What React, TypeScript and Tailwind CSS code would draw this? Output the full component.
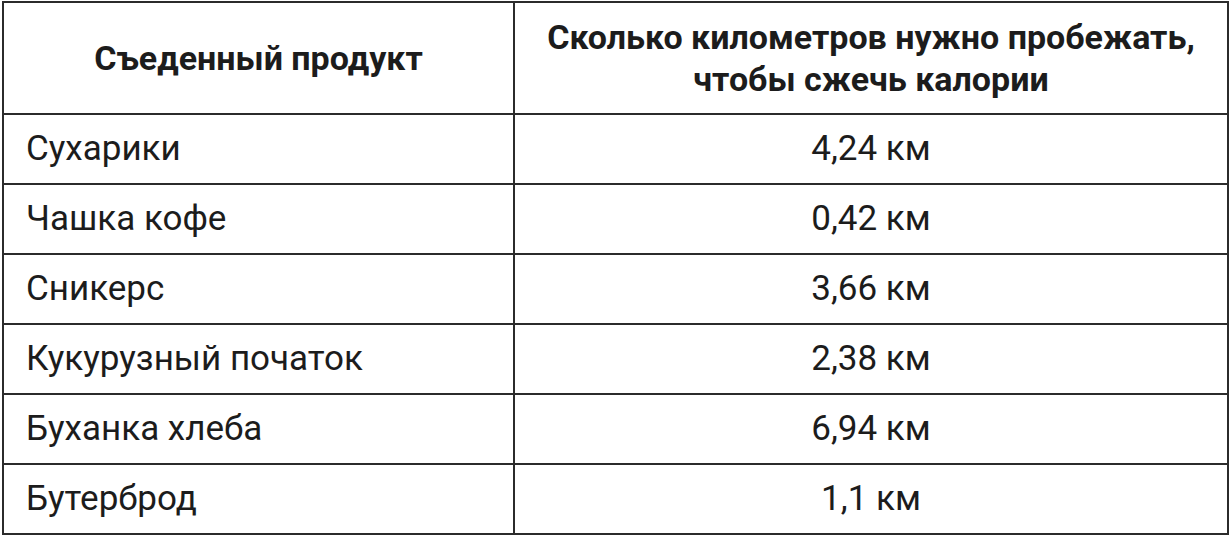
import React from 'react';

const rows: [string, string][] = [
  ['Сухарики', '4,24 км'],
  ['Чашка кофе', '0,42 км'],
  ['Сникерс', '3,66 км'],
  ['Кукурузный початок', '2,38 км'],
  ['Буханка хлеба', '6,94 км'],
  ['Бутерброд', '1,1 км'],
];

const App = () => {
  return (
    <div className="w-[1231px] h-[537px] bg-white pl-[2px] pt-[1px] font-['Roboto',sans-serif] text-[#1c1c1c]">
      <table className="w-[1227px] border-collapse border-2 border-[#2b2b2b] table-fixed">
        <colgroup>
          <col className="w-[511px]" />
          <col />
        </colgroup>
        <thead>
          <tr className="h-[112px]">
            <th className="border-2 border-[#2b2b2b] text-center align-middle text-[34px] font-bold leading-[42px]">
              Съеденный продукт
            </th>
            <th className="border-2 border-[#2b2b2b] text-center align-middle text-[34px] font-bold leading-[42px]">
              Сколько километров нужно пробежать,
              <br />
              чтобы сжечь калории
            </th>
          </tr>
        </thead>
        <tbody>
          {rows.map(([product, km]) => (
            <tr key={product} className="h-[70px]">
              <td className="border-2 border-[#2b2b2b] pl-[22px] align-middle text-[35px]">{product}</td>
              <td className="border-2 border-[#2b2b2b] text-center align-middle text-[35px]">{km}</td>
            </tr>
          ))}
        </tbody>
      </table>
    </div>
  );
};

export default App;
